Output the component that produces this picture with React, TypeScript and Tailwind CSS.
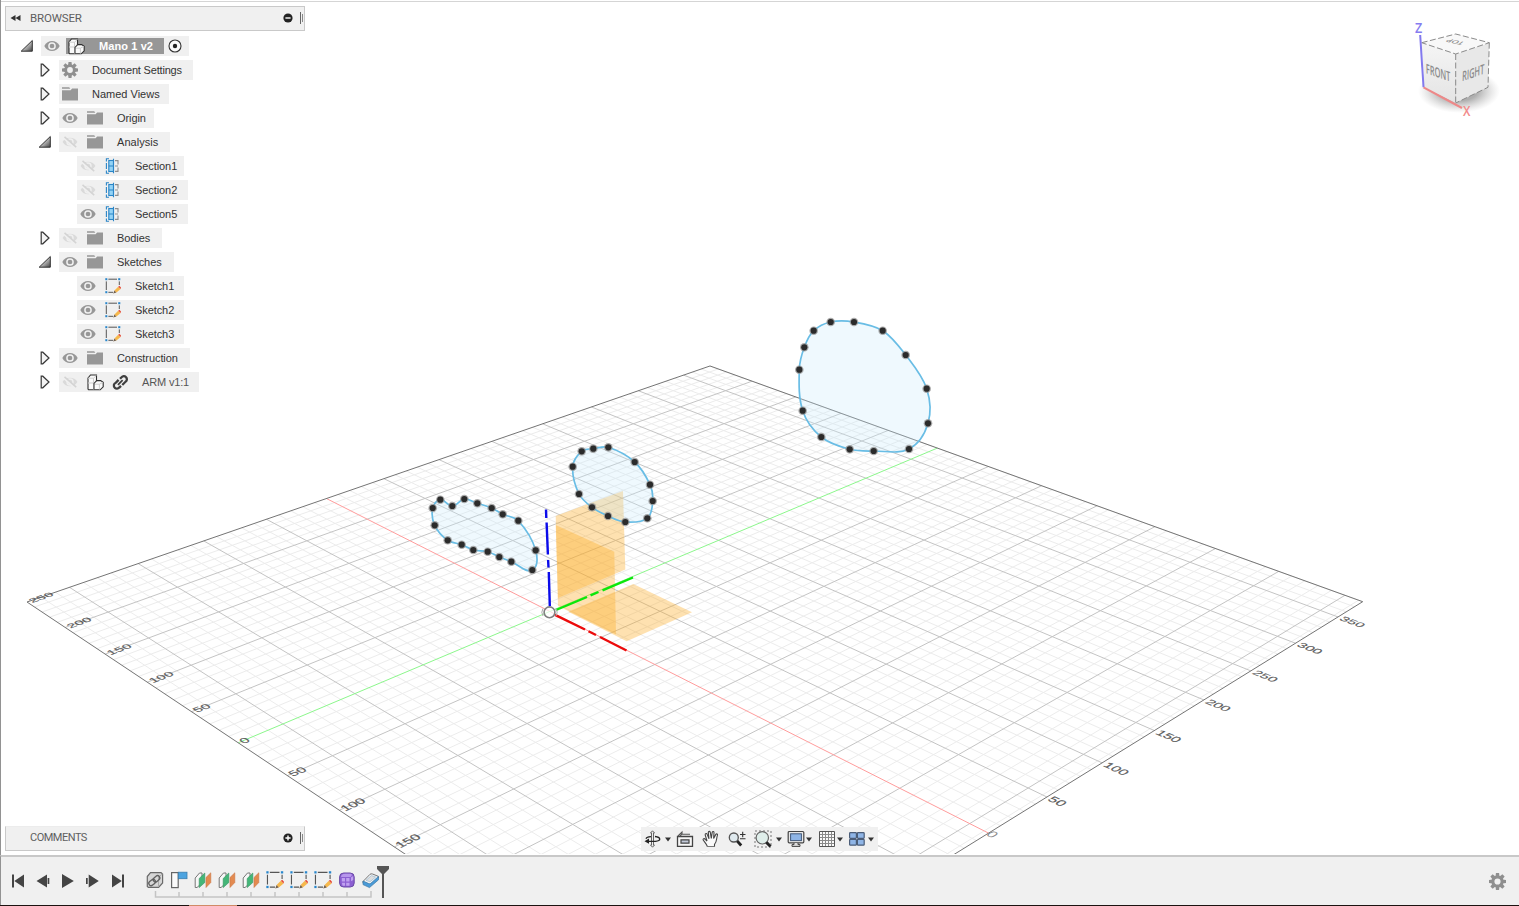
import type { ReactNode } from 'react';

type Pt = [number, number];

/* ---------- ground plane projection ---------- */

const project = (x: number, y: number): Pt => {
  const u = (x + 250) / 613;
  const v = (y + 229.8) / 610;
  const w = 1 - 0.28918 * u + 0.2916 * v;
  return [(27 + 448.96 * u + 890.04 * v) / w, (602 + 130.43 * u - 129.3 * v) / w];
};

const X0 = -250;
const X1 = 363;
const Y0 = -229.8;
const Y1 = 380.2;

const seg = (a: Pt, b: Pt) =>
  `M${a[0].toFixed(2)} ${a[1].toFixed(2)}L${b[0].toFixed(2)} ${b[1].toFixed(2)}`;

let minor = '';
let major = '';
for (let x = -240; x <= 360; x += 10) {
  if (x === 0) continue;
  const s = seg(project(x, Y0), project(x, Y1));
  if (x % 50 === 0) major += s;
  else minor += s;
}
for (let y = -220; y <= 380; y += 10) {
  if (y === 0) continue;
  const s = seg(project(X0, y), project(X1, y));
  if (y % 50 === 0) major += s;
  else minor += s;
}

/* Lays a ruler label on the plane while keeping its on-screen size constant. */
function RulerLabel({ x, y, along, value }: { x: number; y: number; along: 'x' | 'y'; value: number }) {
  const p = project(x, y);
  const px = project(x + 8, y);
  const py = project(x, y + 8);
  const dx: Pt = [px[0] - p[0], px[1] - p[1]];
  const dy: Pt = [py[0] - p[0], py[1] - p[1]];
  const r = along === 'y' ? dy : dx;
  const d = along === 'y' ? dx : ([-dy[0], -dy[1]] as Pt);
  const k = Math.hypot(r[0], r[1]) * 0.98;
  return (
    <text
      transform={`matrix(${r[0] / k} ${r[1] / k} ${d[0] / k} ${d[1] / k} ${p[0]} ${p[1]})`}
      x={along === 'y' ? 2.5 : 3}
      y={along === 'y' ? 5.5 : 4}
    >
      {value}
    </text>
  );
}

/* ---------- sketch profiles ---------- */

const profiles: Pt[][] = [
  [[830.7, 322], [854, 322], [882.7, 330.7], [905.7, 355], [926.7, 388.7], [928, 423.3], [909, 449], [873.7, 451], [849.7, 449.3], [821.3, 437], [802.7, 410.7], [799.3, 369.7], [804.3, 347.3], [813.7, 330.7]],
  [[581.7, 451.3], [593.3, 448.7], [608.3, 447.3], [634.7, 462], [650, 484.7], [652.7, 501], [647.3, 518.3], [625.3, 522], [608, 516], [592, 507.3], [579, 494], [572.7, 466.7]],
  [[440.3, 499.7], [452.3, 506], [464.3, 499], [477.3, 503.3], [491.7, 508], [502.7, 514.3], [518.3, 520.7], [535.7, 550.3], [532.3, 570], [511.3, 561.7], [499.3, 557], [487.7, 551.7], [473.3, 550], [461.7, 544.7], [447.7, 540.3], [434.7, 525.3], [432.7, 508]],
];

const spline = (p: Pt[]) => {
  const n = p.length;
  let d = `M${p[0][0]} ${p[0][1]}`;
  for (let i = 0; i < n; i++) {
    const a = p[(i + n - 1) % n];
    const b = p[i];
    const c = p[(i + 1) % n];
    const e = p[(i + 2) % n];
    const l = Math.hypot(c[0] - b[0], c[1] - b[1]) / 3;
    const t1 = Math.hypot(c[0] - a[0], c[1] - a[1]);
    const t2 = Math.hypot(e[0] - b[0], e[1] - b[1]);
    d += `C${b[0] + ((c[0] - a[0]) / t1) * l} ${b[1] + ((c[1] - a[1]) / t1) * l} ${c[0] - ((e[0] - b[0]) / t2) * l} ${c[1] - ((e[1] - b[1]) / t2) * l} ${c[0]} ${c[1]}`;
  }
  return d + 'Z';
};

function Scene() {
  const border = [project(X0, Y0), project(X0, Y1), project(X1, Y1), project(X1, Y0)];
  return (
    <svg className="absolute top-0 -left-px" width="1519" height="854" viewBox="0 0 1519 854">
      <path d={minor} stroke="#ececec" fill="none" />
      <path d={major} stroke="#c4c4c4" fill="none" />
      <path d={seg(project(X0, 0), project(X1, 0))} stroke="#ff9c9c" />
      <path d={seg(project(0, Y0), project(0, Y1))} stroke="#8cf78c" />
      <polygon points={border.map((p) => p.join(',')).join(' ')} fill="none" stroke="#747474" />
      <g fontFamily="Liberation Sans, Arial, sans-serif" fontSize="14" fill="#5c5c5c" stroke="#5c5c5c" strokeWidth="0.25">
        {[-250, -200, -150, -100, -50, 0, 50, 100, 150].map((x) => (
          <RulerLabel key={x} x={x} y={Y0} along="y" value={Math.abs(x)} />
        ))}
        {[50, 100, 150, 200, 250, 300, 350].map((y) => (
          <RulerLabel key={y} x={X1} y={y} along="x" value={y} />
        ))}
        <g fill="#8a8a8a" stroke="none">
          <RulerLabel x={X1 - 2} y={0} along="x" value={0} />
        </g>
      </g>
      <g fill="#fbab24" fillOpacity="0.36">
        <polygon points="555.7,516 623,491 625.3,569.5 558,598" />
        <polygon points="555.7,525 614.3,551.7 616,634.5 558,606" />
        <polygon points="568.3,611.7 633.3,584 692,612.3 626.7,641.3" />
      </g>
      {profiles.map((p, i) => (
        <g key={i}>
          <path d={spline(p)} fill="#c6e8fb" fillOpacity="0.28" stroke="#69bde5" strokeWidth="1.7" />
          {p.map(([x, y]) => (
            <g key={`${x}-${y}`}>
              <circle cx={x} cy={y} r="4.3" fill="#8f8f8f" fillOpacity="0.75" />
              <circle cx={x} cy={y} r="3.1" fill="#2b2b2b" />
            </g>
          ))}
        </g>
      ))}
      <g strokeWidth="2.4" fill="none">
        <path stroke="#0b0bea" d="M546 509.5L546.3 518M546.6 522.5L547.9 554.5M548.1 560L548.5 567.5M548.8 572L549.8 606" />
        <path stroke="#0be70b" d="M556 610L587 597M590.5 595.4L598.5 592M602.5 590.4L633 577.5" />
        <path stroke="#ec0b0b" d="M555 614.8L585 629.5M588.5 631.2L596 635M600 637L626.5 650.5" />
      </g>
      <circle cx="549.5" cy="612.3" r="5.4" fill="#fff" fillOpacity="0.7" stroke="#808080" strokeWidth="1.6" />
      <path d="M543 608.5a7 7 0 0 0 0 7.5M556 608.5a7 7 0 0 1 0 7.5" stroke="#aaa" fill="none" />
      <ViewCube />
    </svg>
  );
}

function ViewCube() {
  return (
    <g fontFamily="Open Sans, Noto Sans, sans-serif">
      <defs>
        <radialGradient id="shade">
          <stop offset="0.45" stopColor="#8c8c8c" stopOpacity="0.7" />
          <stop offset="1" stopColor="#bbb" stopOpacity="0" />
        </radialGradient>
        <linearGradient id="front" x1="0" y1="0" x2="0" y2="1">
          <stop offset="0" stopColor="#f5f5f5" />
          <stop offset="1" stopColor="#e4e4e4" />
        </linearGradient>
      </defs>
      <ellipse cx="1459" cy="91" rx="41" ry="22" fill="url(#shade)" />
      <polygon points="1421.7,42.7 1455.7,54 1455.7,103 1424,87.3" fill="url(#front)" />
      <polygon points="1455.7,54 1489.3,42.7 1488,87.3 1455.7,103" fill="#e8e8e8" />
      <polygon points="1421.7,42.7 1455.7,34 1489.3,42.7 1455.7,54" fill="#f8f8f8" />
      <path
        d="M1421.7 42.7L1455.7 34L1489.3 42.7L1455.7 54ZM1455.7 54V103M1489.3 42.7L1488 87.3L1455.7 103"
        fill="none" stroke="#8a8a8a" strokeWidth="1" strokeDasharray="6 2.5"
      />
      <path d="M1420.2 35L1423.5 87.3" stroke="#8279ee" strokeWidth="2" />
      <path d="M1423.5 87.3L1462 108" stroke="#ee8888" strokeWidth="2" />
      <g fill="#8b8b8b" fontWeight="600" textAnchor="middle">
        <text transform="matrix(.55 .19 .03 1 1438.3 77.5)" fontSize="13.5">FRONT</text>
        <text transform="matrix(.55 -.19 -.03 1 1473 77.5)" fontSize="13.5">RIGHT</text>
        <text transform="matrix(-.75 -.17 .5 -.36 1457 40.5)" fontSize="11">TOP</text>
      </g>
      <text transform="matrix(.9 0 0 1 1415 32.7)" fontSize="14" fontWeight="600" fill="#867df0">Z</text>
      <text transform="matrix(.85 0 0 1 1463 116)" fontSize="14" fontWeight="600" fill="#f28a8a">X</text>
    </g>
  );
}

/* ---------- icons ---------- */

function Icon({ children, size = 16 }: { children: ReactNode; size?: number }) {
  return (
    <svg className="block shrink-0" width={size} height={size} viewBox={`0 0 ${size} ${size}`} fill="none">
      {children}
    </svg>
  );
}

const Eye = () => (
  <Icon>
    <path d="M.3 8C3.5 1.4 12.5 1.4 15.7 8C12.5 14.6 3.5 14.6.3 8Z" fill="#979797" />
    <circle cx="8" cy="8" r="3.1" fill="#979797" stroke="#f0f0f0" strokeWidth="1.5" />
  </Icon>
);

const EyeOff = () => (
  <Icon>
    <path d="M.6 8C3.5 2.4 12.5 2.4 15.4 8C12.5 13.6 3.5 13.6.6 8Z" fill="#dadada" />
    <circle cx="8" cy="8" r="3" fill="#dadada" stroke="#f0f0f0" strokeWidth="1.4" />
    <path d="M1.5 3.8L13 14" stroke="#f0f0f0" strokeWidth="2.2" />
    <path d="M2.5 2.8L14.2 13.2" stroke="#d4d4d4" strokeWidth="1.6" />
  </Icon>
);

const Folder = () => (
  <Icon>
    <path d="M0 1.2H7.2L8.3 2.8H0Z M0 4.2H8.6L10.2 2.6H16V14.4H0Z" fill="#979797" />
  </Icon>
);

const Gear = ({ size = 16 }: { size?: number }) => (
  <svg className="block shrink-0" width={size} height={size} viewBox="0 0 16 16" fill="none">
    <circle cx="8" cy="8" r="4.3" stroke="#8f8f8f" strokeWidth="2.8" />
    {[0, 45, 90, 135, 180, 225, 270, 315].map((a) => (
      <path key={a} d="M6.5 0H9.5L9.9 3.4H6.1Z" fill="#8f8f8f" transform={`rotate(${a} 8 8)`} />
    ))}
  </svg>
);

const Component = () => (
  <Icon size={17}>
    <path d="M1 4L3.5 1H9.5V6.6H13.6L16.2 8.4V12.8L13.2 15.8H1.6L1 15Z" fill="#fafafa" stroke="#2f2f2f" strokeWidth="1.1" />
    <path d="M1 9H6.5M6.5 4.2V15.5M1 4.2H6.5L9.5 1.4M12.4 15.5V10.2H7.5M12.4 10.2L15.8 8.4" stroke="#cdcdcd" />
    <path d="M7 15.5V9.4L9.6 6.6" stroke="#3a3a3a" strokeWidth="1.1" />
  </Icon>
);

const Section = () => (
  <Icon>
    <path d="M4 .7H1.4V3.5M1.4 5V11M1.4 12.5V15.3H4" stroke="#2b85c6" strokeWidth="1.1" />
    <rect x="3.8" y="2.5" width="4.7" height="11" fill="#93d3f6" stroke="#2b85c6" strokeWidth="1.1" />
    <path d="M3.8 8H8.5M8.5 .8V15.2" stroke="#2b85c6" strokeWidth="1.1" />
    <path d="M10 2.6H13V6.4M10 8H13M13 9.4V13.4H10" stroke="#8f8f8f" strokeWidth="1.1" />
  </Icon>
);

const Sketch = ({ size = 16 }: { size?: number }) => (
  <svg className="block shrink-0" width={size} height={size} viewBox="0 0 16 16" fill="none">
    <path d="M3.4 1.2H12M1.3 3.4V12M14.3 3.4V7M3.4 14.3H8" stroke="#555" strokeWidth="1" />
    <g fill="#2786cc">
      <rect x="0.3" y="0.2" width="2" height="2" />
      <rect x="13.2" y="0.2" width="2.1" height="2" />
      <rect x="0.3" y="13.2" width="2" height="2" />
    </g>
    <path d="M9.4 12.5L13.2 8.7L15.6 11L11.4 14.6Z" fill="#f6b84c" />
    <path d="M13.2 8.7L14.4 7.8L16 9.5L15.6 11Z" fill="#e64d3a" />
    <path d="M9.4 12.5L11.4 14.6L8.2 15.6Z" fill="#75604a" />
  </svg>
);

const Link = () => (
  <Icon size={17}>
    <g transform="rotate(-45 8.5 8.5)" stroke="#3f3f3f" strokeWidth="2.3">
      <path d="M9 5.3H5A3 3 0 0 0 .8 8.3A3 3 0 0 0 4 11.2H6.5" />
      <path d="M8 11.5H12.5A3 3 0 0 0 16.2 8.5A3 3 0 0 0 13 5.5H10.8" />
      <path d="M5 8.4H11.6" strokeWidth="1.8" />
    </g>
  </Icon>
);

/* ---------- browser tree ---------- */

function Arrow({ open }: { open?: boolean }) {
  return (
    <Icon size={14}>
      {open ? (
        <path d="M1.2 12.2L12.3 1.5V12.2Z" fill="url(#tri)" stroke="#333" strokeWidth="1" />
      ) : (
        <path d="M3.2 1.2H4.8L11 7L4.8 12.8H3.2Z" fill="#f3f3f3" stroke="#383838" strokeWidth="1.2" />
      )}
      <defs>
        <linearGradient id="tri" x1="0" y1="0" x2="1" y2="1">
          <stop offset="0.35" stopColor="#e0e0e0" />
          <stop offset="1" stopColor="#444" />
        </linearGradient>
      </defs>
    </Icon>
  );
}

const rows: { label: string; row: string; tone?: string; arrow?: 'open' | 'closed'; pad: string; icons: ReactNode }[] = [
  { label: 'Document Settings', row: 'w-[134px]', tone: 'tracking-[-0.18px]', arrow: 'closed', pad: 'ml-[39px]', icons: <Gear /> },
  { label: 'Named Views', row: 'w-[110px]', tone: 'tracking-normal', arrow: 'closed', pad: 'ml-[39px]', icons: <Folder /> },
  { label: 'Origin', row: 'w-[95px]', arrow: 'closed', pad: 'ml-[39px]', icons: <><Eye /><Folder /></> },
  { label: 'Analysis', row: 'w-[111px]', tone: 'tracking-[0.05px]', arrow: 'open', pad: 'ml-[39px]', icons: <><EyeOff /><Folder /></> },
  { label: 'Section1', row: 'w-[107px]', pad: 'ml-[77px]', icons: <><EyeOff /><Section /></> },
  { label: 'Section2', row: 'w-[111px]', pad: 'ml-[77px]', icons: <><EyeOff /><Section /></> },
  { label: 'Section5', row: 'w-[111px]', pad: 'ml-[77px]', icons: <><Eye /><Section /></> },
  { label: 'Bodies', row: 'w-[103px]', arrow: 'closed', pad: 'ml-[39px]', icons: <><EyeOff /><Folder /></> },
  { label: 'Sketches', row: 'w-[115px]', arrow: 'open', pad: 'ml-[39px]', icons: <><Eye /><Folder /></> },
  { label: 'Sketch1', row: 'w-[107px]', pad: 'ml-[77px]', icons: <><Eye /><Sketch /></> },
  { label: 'Sketch2', row: 'w-[107px]', pad: 'ml-[77px]', icons: <><Eye /><Sketch /></> },
  { label: 'Sketch3', row: 'w-[107px]', pad: 'ml-[77px]', icons: <><Eye /><Sketch /></> },
  { label: 'Construction', row: 'w-[131px]', arrow: 'closed', pad: 'ml-[39px]', icons: <><Eye /><Folder /></> },
  { label: 'ARM v1:1', row: 'w-[140px]', tone: 'text-[#555] -ml-px tracking-[-0.15px]', arrow: 'closed', pad: 'ml-[39px]', icons: <><EyeOff /><Component /><span className="-ml-px"><Link /></span></> },
];

function Tree() {
  return (
    <div className="mt-[6px] flex flex-col gap-1 text-[11px] leading-5 text-[#333]">
      <div className="ml-[20px] flex h-5 items-center">
        <Arrow open />
        <div className="ml-[7px] flex h-5 w-[148px] items-center bg-[#f0f0f0] pl-[3px]">
          <Eye />
          <div className="ml-1.5 flex h-4 w-[98px] items-center bg-[#979797] pl-0.5">
            <Component />
            <span className="ml-[14px] whitespace-nowrap font-bold leading-4 tracking-[0.1px] text-white">Mano 1 v2</span>
          </div>
          <span className="ml-[3.5px]">
            <Icon size={14}>
              <circle cx="7" cy="7" r="6" stroke="#333" strokeWidth="1.1" fill="#fafafa" />
              <circle cx="7" cy="7" r="2.2" fill="#222" />
            </Icon>
          </span>
        </div>
      </div>
      {rows.map((r) => (
        <div key={r.label} className={`flex h-5 items-center ${r.pad}`}>
          {r.arrow && (
            <span className="-ml-px mr-[7px]">
              <Arrow open={r.arrow === 'open'} />
            </span>
          )}
          <div className={`flex h-5 shrink-0 items-center gap-[9px] bg-[#f0f0f0] pl-[3px] ${r.row}`}>
            {r.icons}
            <span className="ml-[5px] whitespace-nowrap">
              <span className={r.tone ?? 'tracking-[-0.08px]'}>{r.label}</span>
            </span>
          </div>
        </div>
      ))}
    </div>
  );
}

function PanelHeader({ title, open }: { title: string; open?: boolean }) {
  return (
    <div className={`ml-[5px] flex h-[25px] w-[300px] items-center border border-[#c9c9c9] bg-[#f0f0f0] pb-px pl-1 ${open ? '' : 'border-t-[#ececec]'}`}>
      <div className="w-5">
        {open && (
          <Icon size={12}>
            <path d="M5.5 3V9L.5 6ZM10.5 3V9L5.5 6Z" fill="#333" />
          </Icon>
        )}
      </div>
      <span className={`grow font-[Roboto,sans-serif] leading-4 text-[#5f5f5f] ${open ? 'text-[11.5px] tracking-[-0.15px]' : 'text-[11px] tracking-[-0.5px]'}`}>
        {title}
      </span>
      <Icon size={10}>
        <circle cx="5" cy="5" r="4.6" fill="#222" />
        <path d={open ? 'M2.4 5H7.6' : 'M2.4 5H7.6M5 2.4V7.6'} stroke="#fff" strokeWidth="1.4" />
      </Icon>
      <div className="ml-[7px] mr-px flex h-3 items-center gap-px">
        <i className="h-3 w-px bg-[#666]" />
        <i className="h-2 w-px bg-[#888]" />
      </div>
    </div>
  );
}

/* ---------- navigation bar ---------- */

const Caret = () => (
  <svg className="block shrink-0" width="6" height="5" viewBox="0 0 6 5">
    <path d="M0 .5H6L3 4.5Z" fill="#333" />
  </svg>
);

function NavBar() {
  return (
    <div className="mb-1 ml-[641px] flex h-6 w-[237px] items-center bg-[#f0f0f0] pl-[3px]">
      <Icon size={18}>
        <path d="M6.5 3L8.5 .8L10.5 3H9.5V15H10.5L8.5 17.2L6.5 15H7.5V3Z" fill="#eee" stroke="#555" strokeWidth=".9" />
        <path d="M11 6.5C17 7.3 17.5 10.8 11.5 11.3L3 11.3M7 6.6C4 6.9 2.4 7.6 2 8.7" stroke="#222" strokeWidth="1.3" />
        <path d="M.5 11.2L5 8.6V13.8Z" fill="#222" />
      </Icon>
      <span className="ml-[3px]"><Caret /></span>
      <span className="ml-[5px]">
        <Icon size={18}>
          <path d="M1.5 6.5H16.5V16.3H1.5Z" fill="#f6f6f6" stroke="#444" strokeWidth="1.3" />
          <path d="M5 9.8H13V13.2H5Z" fill="#c3cad9" stroke="#444" strokeWidth="1.2" />
          <path d="M2 6L6 2V4.2H14M6 4.2L4 6" stroke="#555" strokeWidth="1.1" />
        </Icon>
      </span>
      <span className="ml-2">
        <Icon size={18}>
          <path
            d="M5.5 16.7C4.5 14 2.5 12 1.2 10C.7 8.7 2.3 8.2 3.3 9.3L5 11L3.2 5C3 3.3 4.7 3 5.2 4.4L7 8.7L6.3 2.4C6.4 1 8 1 8.3 2.4L9.3 8.3L10.2 2.3C10.6 1 12.1 1.2 12 2.7L11.6 8.6L13.8 4.4C14.6 3.3 15.9 4 15.4 5.4C14.3 8.4 15 12 12.5 14.4V16.7"
            fill="#fafafa" stroke="#444" strokeWidth="1.1"
          />
          <path d="M5.5 16.5H12.5" stroke="#777" />
        </Icon>
      </span>
      <span className="ml-2">
        <Icon size={18}>
          <circle cx="5.8" cy="7.5" r="4.5" fill="#dfe9ee" stroke="#555" strokeWidth="1.3" />
          <path d="M9.2 11L13.2 15.5" stroke="#222" strokeWidth="2.8" />
          <path d="M12 4.5H17.5M14.7 1.8V7.3M12 8.8H17.5" stroke="#333" strokeWidth="1.1" />
        </Icon>
      </span>
      <span className="ml-2">
        <Icon size={18}>
          <path d="M1 1H17V17H1Z" stroke="#777" strokeDasharray="2 2" />
          <circle cx="8.3" cy="7.8" r="6.2" fill="#dfeeea" stroke="#666" strokeWidth="1.2" />
          <path d="M12.3 12.2L16.5 16.5" stroke="#222" strokeWidth="3" />
        </Icon>
      </span>
      <span className="ml-1"><Caret /></span>
      <span className="ml-[5px]">
        <Icon size={18}>
          <rect x="1.2" y="1.5" width="15.6" height="11.3" rx="1" fill="#e8e8e8" stroke="#444" strokeWidth="1.2" />
          <rect x="3.6" y="3.8" width="10.8" height="6.8" fill="#8fb5e6" stroke="#42597a" />
          <path d="M7 13V14.6H5V16.4H13V14.6H11V13" fill="#ddd" stroke="#444" />
        </Icon>
      </span>
      <span className="ml-px"><Caret /></span>
      <span className="ml-[6px]">
        <Icon size={18}>
          <path d="M1.5 1.5H16.5V16.5H1.5Z" fill="#fafafa" />
          <path d="M4.5 1.5V16.5M7.5 1.5V16.5M10.5 1.5V16.5M13.5 1.5V16.5M1.5 4.5H16.5M1.5 7.5H16.5M1.5 10.5H16.5M1.5 13.5H16.5" stroke="#8a8a8a" />
          <path d="M1.5 1.5H16.5V16.5H1.5Z" stroke="#555" />
        </Icon>
      </span>
      <span className="ml-px"><Caret /></span>
      <span className="ml-[5px]">
        <Icon size={18}>
          {[[1.6, 2.6], [9.4, 2.6], [1.6, 9.4], [9.4, 9.4]].map(([x, y]) => (
            <rect key={`${x}-${y}`} x={x} y={y} width="6.8" height="5.8" rx=".8" fill="#8fb5e6" stroke="#4b5d78" strokeWidth="1.2" />
          ))}
        </Icon>
      </span>
      <span className="ml-0.5"><Caret /></span>
    </div>
  );
}

/* ---------- timeline ---------- */

const LinkedPart = () => (
  <Icon size={18}>
    <path d="M1.3 5.5L4.5 1.6H15L16.6 3V12L12.6 16.4H2.4L1.3 15.4Z" fill="#d6d6d6" stroke="#6a6a6a" strokeWidth="1.2" />
    <path d="M12.5 16V6L16.5 3" stroke="#aaa" />
    <g transform="rotate(-40 8.5 9.5)" stroke="#606060" strokeWidth="1.3">
      <rect x="1.8" y="7.2" width="7.2" height="4.6" rx="2.3" />
      <rect x="7.5" y="7.2" width="7.2" height="4.6" rx="2.3" />
    </g>
  </Icon>
);

const Flag = () => (
  <Icon size={18}>
    <rect x="1.6" y="1.6" width="6.6" height="15" fill="#fafafa" stroke="#666" strokeWidth="1.2" />
    <rect x="8.3" y="1.2" width="8.7" height="6.5" fill="#4ba3e0" stroke="#397eae" strokeWidth=".8" />
  </Icon>
);

const Plane = () => (
  <Icon size={18}>
    <path d="M1.2 7L5.5 2H8V12L3 16.5H1.2Z" fill="#f7f7f7" stroke="#777" strokeWidth="1" />
    <path d="M5.2 7.5L10.8 2V11.5L5.2 16.6Z" fill="#44b678" stroke="#34925f" strokeWidth=".6" />
    <path d="M12 6.5L16.8 1.8V11.5L12 16.5Z" fill="#e38a50" stroke="#c97644" strokeWidth=".6" />
  </Icon>
);

const Form = () => (
  <Icon size={18}>
    <rect x="1.6" y="2" width="14.6" height="14" rx="4" fill="#8c5fd2" stroke="#6a4ba6" />
    <path d="M3 6Q3 3 7 2.8H12Q15.5 3 12.5 6Z" fill="#b796ec" />
    <path d="M3.8 7H7V10.5H3.8ZM8.2 7H11.5V10.5H8.2ZM3.8 11.8H7V14.8H4.6ZM8.2 11.8H11.5V14.8H8.2ZM13 6.5L15.2 5V9L13 10.2Z" fill="#c0a1f0" />
  </Icon>
);

const Extrude = () => (
  <Icon size={18}>
    <path d="M1 10.5L8 3.3Q9 2.5 10.5 3L16 5.2Q17 6 16.2 7L9 13.8Q8 14.6 6.8 14L1.4 12Q.5 11.2 1 10.5Z" fill="#f3f3f3" stroke="#777" />
    <path d="M1 10V13.6L7.5 16.6L16.5 8.8V5.4L8.8 12.3Q8 13 6.8 12.6Z" fill="#4a9bd8" stroke="#3876a3" strokeWidth=".7" />
    <path d="M4 9.3L9.5 4.6L13.6 6L8 10.8Z" fill="#dedede" stroke="#8fb4cf" strokeWidth=".6" />
  </Icon>
);

function Timeline() {
  return (
    <footer className="flex h-[50px] shrink-0 items-start border-t-2 border-l border-t-[#c8c8c8] border-l-[#929292] bg-[#f0f0f0]">
      <svg className="ml-[9px] mt-4 block shrink-0" width="116" height="16" viewBox="0 0 116 16" fill="#444">
        <path d="M2 1.5H4V14.5H2ZM14 1.5V14.5L4.3 8Z" />
        <path d="M37 1.5V14.5L26.5 8ZM37.6 5H39.3V11H37.6Z" />
        <path d="M52 1L63.8 8L52 15Z" />
        <path d="M76 5H77.7V11H76ZM78.7 1.5L88.8 8L78.7 14.5Z" />
        <path d="M102 1.5L111.8 8L102 14.5ZM112 1.5H114V14.5H112Z" />
      </svg>
      <div className="ml-5 mt-[14px] flex w-[237px] flex-col">
        <div className="flex gap-1.5">
          <LinkedPart />
          <Flag />
          <Plane />
          <Plane />
          <Plane />
          <Sketch size={18} />
          <Sketch size={18} />
          <Sketch size={18} />
          <Form />
          <Extrude />
        </div>
        <svg className="mt-[2px] block" width="237" height="8" viewBox="0 0 237 8">
          <path d="M9.5 0V6H225V0M33 1V6M57 1V6M81 1V6M105 1V6M129 1V6M153 1V6M177 1V6M201 1V6" fill="none" stroke="#c4c4c4" strokeWidth="1.5" />
        </svg>
      </div>
      <svg className="-ml-[7px] mt-[9px] block shrink-0" width="14" height="33" viewBox="0 0 14 33">
        <path d="M1 0H13V3L8 8V32H6V8L1 3Z" fill="#555" />
      </svg>
      <div className="grow" />
      <div className="mr-[13px] mt-4"><Gear size={17} /></div>
    </footer>
  );
}

export default function App() {
  return (
    <div className="flex h-[906px] w-[1519px] flex-col overflow-hidden bg-white font-['Liberation_Sans',Arial,sans-serif]">
      <main className="relative h-[855px] shrink-0 overflow-hidden border-l border-[#929292]">
        <div className="-ml-px h-full">
          <Scene />
          <div className="relative flex h-full flex-col">
            <div className="mb-[4px] ml-px h-[2px] shrink-0 border-b border-[#d5d5d5]" />
            <PanelHeader title="BROWSER" open />
            <div className="-mt-px" />
            <Tree />
            <div className="mt-auto flex items-end">
              <div className="mb-1">
                <PanelHeader title="COMMENTS" />
              </div>
              <div className="-ml-[305px]">
                <NavBar />
              </div>
            </div>
          </div>
        </div>
      </main>
      <Timeline />
      <div className="flex h-px shrink-0 bg-[#1c1210]">
        <div className="ml-[189px] h-px w-12 bg-[#d08a66]" />
      </div>
    </div>
  );
}
